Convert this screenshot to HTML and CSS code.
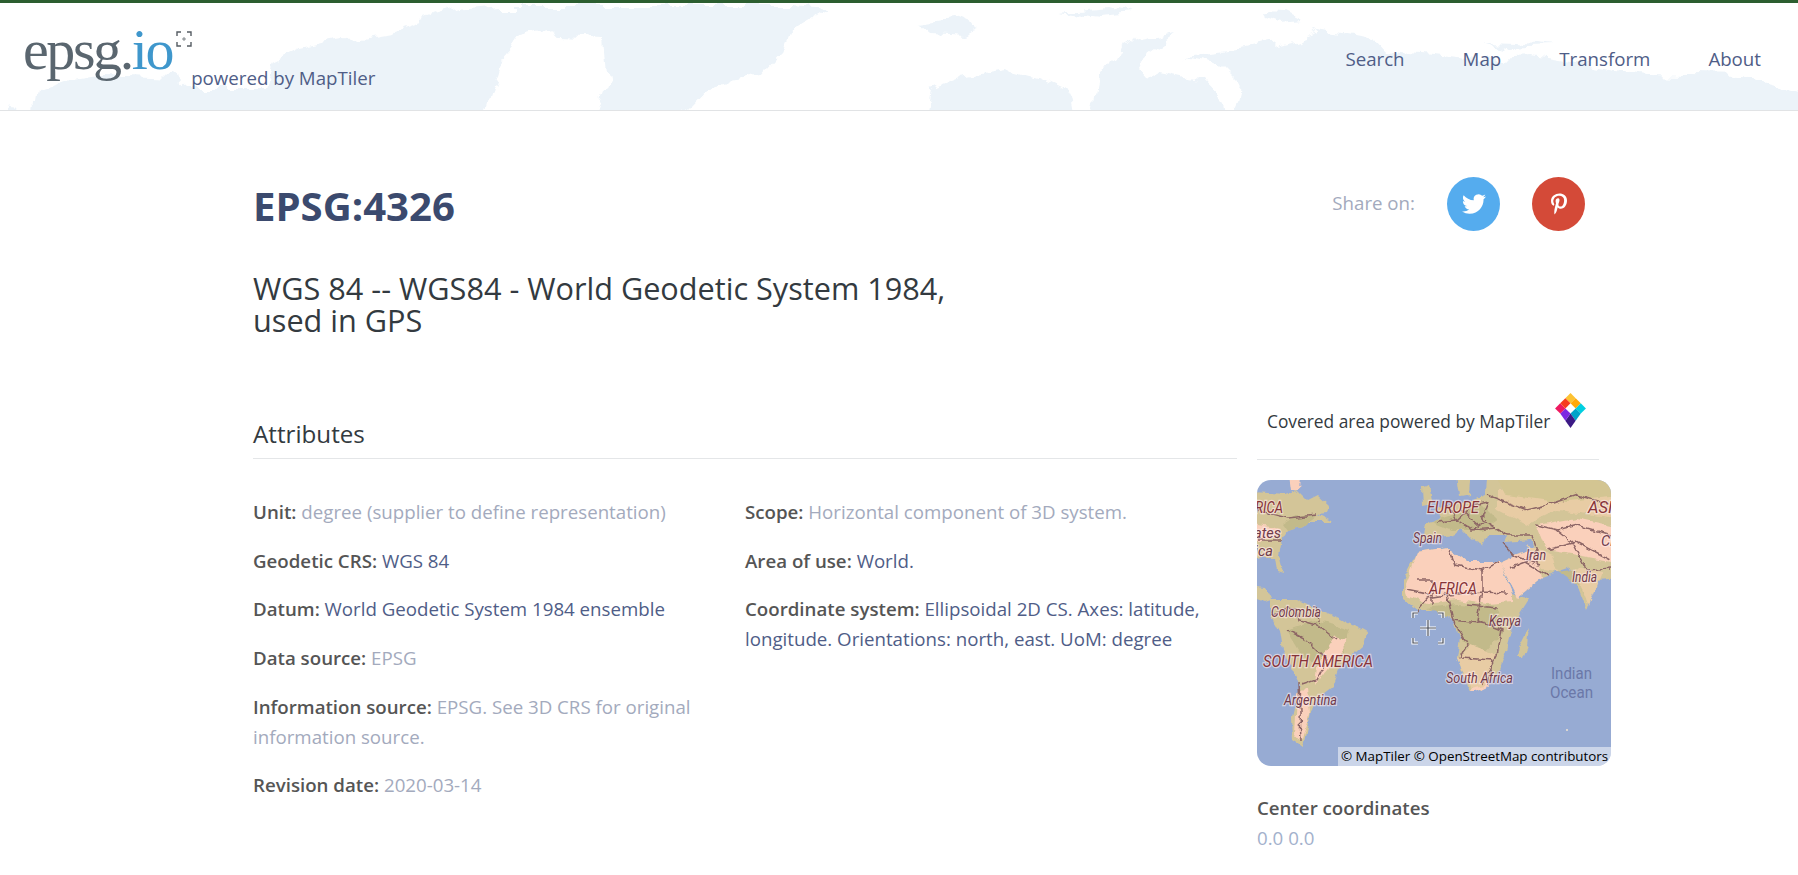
FILE: index.html
```html
<!DOCTYPE html>
<html lang="en">
<head>
    <meta charset="UTF-8">
    <meta name="viewport" content="width=device-width, initial-scale=1.0">
    <title>EPSG:4326</title>
    <link rel="stylesheet" href="styles.css">
</head>
<body>
    <header class="site-header">
        <svg class="header-map" viewBox="0 0 1798 107" preserveAspectRatio="none">
            <defs>
                <filter id="roughHeader" filterUnits="userSpaceOnUse" x="-40" y="-40" width="1880" height="190">
                    <feTurbulence type="fractalNoise" baseFrequency="0.035" numOctaves="4" seed="4"/>
                    <feDisplacementMap in="SourceGraphic" scale="22" xChannelSelector="R" yChannelSelector="G"/>
                </filter>
            </defs>
            <g filter="url(#roughHeader)">
                <path d="M0 130 L8 100 L33 130 L40 85 L67 76 L100 71 L173 74 L187 86 L267 86 L273 59 L300 46 L333 39 L390 30 L433 16 L467 6 L500 3 L790 3 L823 6 L800 20 L790 26 L781 49 L757 76 L707 86 L665 130 L591 130 L607 83 L603 36 L558 34 L554 26 L520 34 L500 60 L480 130 Z"/>
                <path d="M922 130 L930 86 L964 73 L1005 66 L1040 75 L1071 89 L1079 130 Z"/>
                <path d="M1090 130 L1100 80 L1112 63 L1120 45 L1137 36 L1175 29 L1160 40 L1146 50 L1140 62 L1146 69 L1204 81 L1222 100 L1228 130 L1240 80 L1220 60 L1187 53 L1245 46 L1290 36 L1320 26 L1377 36 L1386 46 L1477 56 L1535 53 L1642 71 L1742 73 L1820 93 L1820 130 Z"/>
                <path d="M922 18 L950 14 L980 26 L960 32 L935 30 Z"/>
                <path d="M1261 9 L1285 10 L1303 19 L1280 21 L1265 16 Z"/>
                <path d="M1063 9 L1110 4 L1137 11 L1100 14 Z"/>
                <path d="M1485 38 L1520 39 L1551 43 L1510 45 Z"/>
            </g>
        </svg>
        <a class="logo" href="#">
            <span class="logo-text">epsg<span class="logo-dot">.</span><span class="logo-io">io</span></span>
            <svg class="logo-mark" viewBox="0 0 16 16" fill="none" stroke="#555c63" stroke-width="1.4">
                <path d="M1 5V1H5M11 1H15V5M15 11V15H11M5 15H1V11"/>
                <path d="M8 6V10M6 8H10" stroke-width=".7"/>
            </svg>
        </a>
        <span class="powered">powered by MapTiler</span>
        <nav class="nav">
            <a href="#">Search</a>
            <a href="#">Map</a>
            <a href="#">Transform</a>
            <a href="#">About</a>
        </nav>
    </header>

    <main class="page">
        <div class="title-row">
            <h1>EPSG:4326</h1>
            <div class="share">
                <span class="share-label">Share on:</span>
                <a class="share-btn twitter" href="#">
                    <svg viewBox="0 0 24 24" width="24" height="24"><path fill="#fff" d="M23.953 4.57a10 10 0 01-2.825.775 4.958 4.958 0 002.163-2.723c-.951.555-2.005.959-3.127 1.184a4.92 4.92 0 00-8.384 4.482C7.69 8.095 4.067 6.13 1.64 3.162a4.822 4.822 0 00-.666 2.475c0 1.71.87 3.213 2.188 4.096a4.904 4.904 0 01-2.228-.616v.06a4.923 4.923 0 003.946 4.827 4.996 4.996 0 01-2.212.085 4.936 4.936 0 004.604 3.417 9.867 9.867 0 01-6.102 2.105c-.39 0-.779-.023-1.17-.067a13.995 13.995 0 007.557 2.209c9.053 0 13.998-7.496 13.998-13.985 0-.21 0-.42-.015-.63A9.935 9.935 0 0024 4.59z"/></svg>
                </a>
                <a class="share-btn pinterest" href="#">
                    <svg viewBox="0 0 384 512" width="16" height="22"><path fill="#fff" d="M204 6.5C101.4 6.5 0 74.9 0 185.6 0 256 39.6 296 63.6 296c9.9 0 15.6-27.6 15.6-35.4 0-9.3-23.7-29.1-23.7-67.8 0-80.4 61.2-137.4 140.4-137.4 68.1 0 118.5 38.7 118.5 109.8 0 53.1-21.3 152.7-90.3 152.7-24.9 0-46.2-18-46.2-43.8 0-37.8 26.4-74.4 26.4-113.4 0-66.2-93.9-54.2-93.9 25.8 0 16.8 2.1 35.4 9.6 50.7-13.8 59.4-42 147.9-42 209.1 0 18.9 2.7 37.5 4.5 56.4 3.4 3.8 1.7 3.4 6.9 1.5 50.4-69 48.6-82.5 71.4-172.8 12.3 23.4 44.1 36 69.3 36 106.2 0 153.9-103.5 153.9-196.8C384 71.3 298.2 6.5 204 6.5z"/></svg>
                </a>
            </div>
        </div>
        <h2 class="subtitle">WGS 84 -- WGS84 - World Geodetic System 1984, used in GPS</h2>

        <div class="content">
            <section class="attributes">
                <h3>Attributes</h3>
                <div class="attr-columns">
                    <div>
                        <p><b>Unit:</b> <span class="muted">degree (supplier to define representation)</span></p>
                        <p><b>Geodetic CRS:</b> <a href="#">WGS 84</a></p>
                        <p><b>Datum:</b> <a href="#">World Geodetic System 1984 ensemble</a></p>
                        <p><b>Data source:</b> <span class="muted">EPSG</span></p>
                        <p><b>Information source:</b> <span class="muted">EPSG. See 3D CRS for original information source.</span></p>
                        <p><b>Revision date:</b> <span class="muted">2020-03-14</span></p>
                    </div>
                    <div>
                        <p><b>Scope:</b> <span class="muted">Horizontal component of 3D system.</span></p>
                        <p><b>Area of use:</b> <a href="#">World.</a></p>
                        <p><b>Coordinate system:</b> <a href="#">Ellipsoidal 2D CS. Axes: latitude, longitude. Orientations: north, east. UoM: degree</a></p>
                    </div>
                </div>
            </section>

            <aside class="side">
                <div class="side-head">
                    <span>Covered area powered by MapTiler</span>
                    <svg class="mt-logo" viewBox="0 0 30 34">
                        <polygon fill="#fcc233" points="15,0 20,5 15,10 10,5"/>
                        <polygon fill="#ffa90a" points="20,5 25,10 20,15 15,10"/>
                        <polygon fill="#00cfe0" points="25,10 30,15 25,20 20,15"/>
                        <polygon fill="#00a3c9" points="20,15 25,20 20,27 15,20"/>
                        <polygon fill="#3c1a85" points="15,20 20,27 15,34 10,27"/>
                        <polygon fill="#7c28e2" points="10,15 15,20 10,27 5,20"/>
                        <polygon fill="#ee1a60" points="5,10 10,15 5,20 0,15"/>
                        <polygon fill="#f63c1e" points="10,5 15,10 10,15 5,10"/>
                    </svg>
                </div>
                <div class="map">
                    <svg viewBox="0 0 354 286" width="354" height="286">
                        <defs>
                            <filter id="rough" filterUnits="userSpaceOnUse" x="-30" y="-30" width="414" height="346">
                                <feTurbulence type="fractalNoise" baseFrequency="0.09" numOctaves="3" seed="7"/>
                                <feDisplacementMap in="SourceGraphic" scale="7" xChannelSelector="R" yChannelSelector="G"/>
                            </filter>
                            <filter id="roughLine" filterUnits="userSpaceOnUse" x="-30" y="-30" width="414" height="346">
                                <feTurbulence type="fractalNoise" baseFrequency="0.14" numOctaves="2" seed="3"/>
                                <feDisplacementMap in="SourceGraphic" scale="6" xChannelSelector="R" yChannelSelector="G"/>
                            </filter>
                        </defs>
                        <rect width="354" height="286" fill="#97abd3"/>
                        <g filter="url(#rough)">
                            <!-- land -->
                            <g fill="#d3c598">
                                <path d="M-20 11L28 14L40 10L50 20L60 15L72 26L70 33L60 34L76 42L50 42L45 47L30 52L25 60L22 75L26 92L20 90L18 78L5 78L-20 85Z"/>
                                <path d="M-20 105L8 108L14 120L8 122L-20 112Z"/>
                                <path d="M13 120L40 120L80 137L110 153L106 167L83 187L76 207L63 217L53 233L46 267L36 260L35 237L43 203L26 170L23 150L13 133Z"/>
                                <path d="M146 100L160 73L190 68L210 82L243 82L256 113L273 120L256 147L250 170L243 190L223 210L213 212L200 177L203 157L196 140L183 130L160 130L146 120Z"/>
                                <path d="M230 -20L374 -20L374 97L340 100L330 130L313 87L296 93L286 97L261 117L243 83L258 76L278 70L275 60L245 62L250 55L230 55L225 65L215 60L205 50L195 55L165 60L168 45L185 38L178 30L190 25L210 22L228 15Z"/>
                                <path d="M262 168L272 148L270 165L265 178L260 178Z"/>
                                <path d="M165 8L172 6L176 24L166 26Z"/>
                                <path d="M198 -20L215 -20L212 14L203 16Z"/>
                            </g>
                            <!-- greener areas -->
                            <g fill="#c2ba8a">
                                <path d="M30 150L60 140L92 150L85 170L60 185L45 175Z"/>
                                <path d="M170 128L200 124L240 126L248 150L225 175L205 160L196 138Z"/>
                                <path d="M175 42L225 25L240 40L225 50L195 50Z"/>
                                <path d="M40 35L60 35L45 47L30 52L25 45Z"/>
                                <path d="M300 92L315 90L330 120L322 105Z"/>
                            </g>
                            <!-- dry areas -->
                            <g fill="#fad0bb">
                                <path d="M148 104L160 73L190 68L210 82L243 82L256 113L256 122L230 124L200 120L170 124L150 116Z"/>
                                <path d="M243 83L258 76L278 70L286 97L261 117Z"/>
                                <path d="M280 45L320 38L374 50L374 85L320 75L290 70Z"/>
                                <path d="M30 -20L44 -20L42 10L34 10Z"/>
                                <path d="M213 212L224 195L232 205L218 212Z"/>
                                <path d="M40 215L50 205L52 235L44 262L38 255Z"/>
                                <path d="M-20 40L24 48L15 60L-20 60Z"/>
                                <path d="M78 155L90 160L70 190L58 205L60 185Z"/>
                            </g>
                            <g fill="#e8cca4">
                                <path d="M240 10L374 5L374 40L300 30L270 45L240 30Z"/>
                                <path d="M200 178L215 165L240 175L228 205L214 208Z"/>
                                <path d="M270 65L295 75L300 92L285 90Z"/>
                                <path d="M318 88L345 92L332 125Z"/>
                            </g>
                            <path fill="#d3c592" d="M232 -20L374 -20L374 15L300 22L250 15Z"/>
                            <circle cx="309" cy="250" r="1" fill="#f0e4d0"/>
                        </g>
                        <!-- borders -->
                        <g filter="url(#roughLine)" fill="none" stroke="#8d6666" stroke-width="1.5">
                            <path d="M160 100L175 100L175 125M192 70L197 85L225 90L225 112L190 115L170 118M243 82L225 90M225 112L250 113"/>
                            <path d="M160 130L170 118M190 115L196 140L210 165L203 178M225 112L220 140L245 150L240 175L224 205M196 140L240 145M205 178L235 180L232 205M150 110L175 115M210 125L240 128"/>
                            <path d="M250 55L275 55L280 70L268 82L290 95M245 62L258 76L282 85M268 82L252 88"/>
                            <path d="M180 42L200 40L215 25L232 22L225 40L250 55M200 40L215 50L230 40M190 25L200 40M205 30L222 45M215 50L240 48"/>
                            <path d="M230 15L270 30L290 25L320 15L354 25M280 45L300 50L320 45L354 55M290 70L320 62L354 80M315 62L330 90L354 88M300 50L315 62"/>
                            <path d="M0 30L30 38L60 35M0 60L24 60"/>
                            <path d="M14 135L30 128L40 130L42 140L60 145M30 150L50 160L70 180L60 200L45 205M42 202L44 262M60 145L80 160M60 125L62 143"/>
                        </g>
                        <!-- labels -->
                        <g class="map-labels">
                            <text x="26" y="33" text-anchor="end" class="big" textLength="35" lengthAdjust="spacingAndGlyphs">ERICA</text>
                            <text x="24" y="58" text-anchor="end">ates</text>
                            <text x="16" y="76" text-anchor="end">ica</text>
                            <text x="170" y="33" class="big" textLength="52" lengthAdjust="spacingAndGlyphs">EUROPE</text>
                            <text x="331" y="33" class="big">ASIA</text>
                            <text x="156" y="63" textLength="29" lengthAdjust="spacingAndGlyphs">Spain</text>
                            <text x="269" y="80" textLength="20" lengthAdjust="spacingAndGlyphs">Iran</text>
                            <text x="344" y="66">Ch</text>
                            <text x="315" y="102" textLength="25" lengthAdjust="spacingAndGlyphs">India</text>
                            <text x="172" y="114" class="big" textLength="48" lengthAdjust="spacingAndGlyphs">AFRICA</text>
                            <text x="14" y="137" textLength="50" lengthAdjust="spacingAndGlyphs">Colombia</text>
                            <text x="232" y="146" textLength="32" lengthAdjust="spacingAndGlyphs">Kenya</text>
                            <text x="6" y="187" class="big" textLength="110" lengthAdjust="spacingAndGlyphs">SOUTH AMERICA</text>
                            <text x="189" y="203" textLength="67" lengthAdjust="spacingAndGlyphs">South Africa</text>
                            <text x="27" y="225" textLength="53" lengthAdjust="spacingAndGlyphs">Argentina</text>
                        </g>
                        <text x="294" y="199" class="ocean" textLength="41" lengthAdjust="spacingAndGlyphs">Indian</text>
                        <text x="293" y="218" class="ocean" textLength="43" lengthAdjust="spacingAndGlyphs">Ocean</text>
                        <!-- center marker -->
                        <g fill="none">
                            <g stroke="#fff" stroke-width="3.2">
                                <path d="M156 138V133H161M181 133H186V138M186 158V163H181M161 163H156V158"/>
                                <path d="M171 140V156M163 148H179"/>
                            </g>
                            <g stroke="#4a4f5a" stroke-width="1.2">
                                <path d="M156 138V133H161M181 133H186V138M186 158V163H181M161 163H156V158"/>
                                <path d="M171 140V156M163 148H179"/>
                            </g>
                        </g>
                    </svg>
                    <div class="attribution">© MapTiler © OpenStreetMap contributors</div>
                </div>
                <div class="center-coords">
                    <b>Center coordinates</b>
                    <span class="muted">0.0 0.0</span>
                </div>
            </aside>
        </div>
    </main>
</body>
</html>
```

FILE: styles.css
```css
html, body {
    margin: 0;
    padding: 0;
    overflow: hidden;
}
body {
    font-family: "Open Sans", sans-serif;
    font-size: 18.7px;
    color: #4a4a4a;
    background: #fff;
}
a {
    color: #4f5d87;
    text-decoration: none;
}
.muted {
    color: #a3aabd;
}

/* header */
.site-header {
    position: relative;
    display: flex;
    align-items: flex-start;
    height: 107px;
    border-top: 3px solid #2c5e30;
    border-bottom: 1px solid #e1e3e5;
    padding-left: 23px;
    padding-right: 37px;
    overflow: hidden;
}
.header-map {
    position: absolute;
    left: 0;
    top: 0;
    width: 100%;
    height: 100%;
    fill: #ecf3f9;
}
.logo {
    position: relative;
    display: flex;
    align-items: flex-start;
    margin-top: 22px;
}
.logo-text {
    font-family: "Liberation Serif", serif;
    font-size: 58px;
    line-height: 50px;
    letter-spacing: -2.4px;
    color: #5a666f;
}
.logo-io {
    color: #3f97cc;
}
.logo-mark {
    width: 16px;
    height: 16px;
    margin-left: 4px;
    margin-top: 6px;
}
.powered {
    position: relative;
    margin-top: 62px;
    margin-left: -1px;
    line-height: 25px;
    color: #4f5d87;
}
.nav {
    position: relative;
    display: flex;
    gap: 58px;
    margin-left: auto;
    margin-top: 43px;
    line-height: 25px;
}

/* page */
.page {
    width: 1358px;
    margin-left: 253px;
}
.title-row {
    display: flex;
    justify-content: space-between;
    align-items: center;
    margin-top: 66px;
    height: 54px;
    padding-right: 26px;
}
h1 {
    margin: 0;
    padding-top: 2px;
    font-size: 40.1px;
    font-weight: 700;
    color: #3b4a6e;
}
.share {
    display: flex;
    align-items: center;
    gap: 32px;
}
.share-label {
    padding-bottom: 3px;
    color: #a3aabd;
}
.share-btn {
    display: flex;
    align-items: center;
    justify-content: center;
    width: 53px;
    height: 54px;
    border-radius: 50%;
}
.share .twitter {
    background: #55acee;
}
.share .pinterest {
    background: #d44a38;
}
.subtitle {
    width: 720px;
    margin: 41px 0 0;
    font-size: 30.65px;
    font-weight: 400;
    line-height: 32px;
    color: #333a40;
}
.content {
    display: flex;
    gap: 20px;
    margin-top: 58.6px;
}
.attributes {
    width: 984px;
}
h3 {
    margin: 0;
    padding: 22px 0 8.4px;
    font-size: 24.2px;
    font-weight: 400;
    line-height: 33px;
    color: #333a40;
    border-bottom: 1px solid #e4e6e8;
}
.attr-columns {
    display: grid;
    grid-template-columns: 1fr 1fr;
    margin-top: 38px;
}
.attr-columns > div:first-child {
    padding-right: 50px;
}
.attr-columns p {
    margin: 0 0 18.7px;
    line-height: 30px;
}
.attr-columns b,
.center-coords b {
    font-weight: 600;
    color: #555;
}
.side {
    width: 354px;
}
.side-head {
    display: flex;
    align-items: flex-end;
    gap: 5px;
    width: 342px;
    height: 65px;
    box-sizing: border-box;
    padding: 0 0 26px 10px;
    font-size: 17.35px;
    line-height: 24px;
    color: #333a40;
    border-bottom: 1px solid #e4e6e8;
}
.mt-logo {
    flex: none;
    width: 31px;
    height: 35px;
    margin-bottom: 5px;
}
.map {
    position: relative;
    height: 286px;
    margin-top: 20px;
    border-radius: 14px;
    overflow: hidden;
}
.map svg {
    display: block;
}
.map-labels text {
    font-family: Roboto, sans-serif;
    font-style: italic;
    font-size: 14.5px;
    fill: #6f3a4a;
    stroke: rgba(255, 235, 235, .6);
    stroke-width: 2.5px;
    paint-order: stroke;
}
.map-labels text.big {
    font-size: 16.5px;
    fill: #863338;
}
.ocean {
    font-family: Roboto, sans-serif;
    font-size: 16px;
    fill: #6b78a8;
}
.attribution {
    position: absolute;
    right: 0;
    bottom: 0;
    width: 273px;
    box-sizing: border-box;
    padding-left: 3px;
    font-size: 13.36px;
    line-height: 19px;
    white-space: nowrap;
    color: #000;
    background: rgba(255, 255, 255, .5);
}
.center-coords {
    display: flex;
    flex-direction: column;
    margin-top: 27px;
    line-height: 30px;
}
.center-coords .muted {
    color: #a3b1cc;
}
```
